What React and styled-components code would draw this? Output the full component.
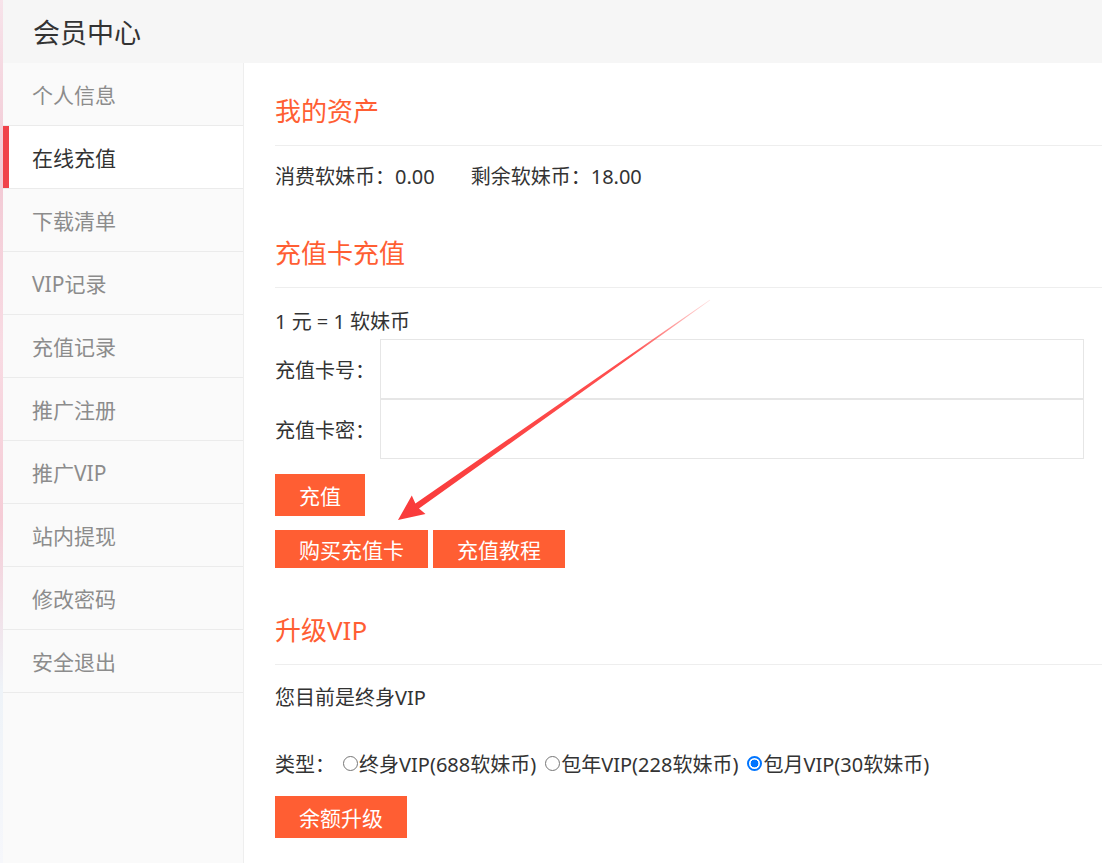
import React, { useState } from 'react'
import styled, { createGlobalStyle } from 'styled-components'

const GlobalStyle = createGlobalStyle`
    html, body {
        margin: 0;
        padding: 0;
    }
    body {
        font-family: "Noto Sans", "Noto Sans CJK SC", sans-serif;
        color: #333;
        background: linear-gradient(180deg, #f7e3ea 0%, #f2c9d4 20%, #f8dbe3 40%, #f5ccd6 60%, #eef3f8 80%, #f6f7fb 100%);
    }
`;

const ORANGE = '#ff5e33';

const StyledPage = styled.div`
    position: relative;
    margin-left: 3px;
    min-height: 863px;
    display: flex;
    flex-direction: column;
    background-color: #ffffff;
    overflow: hidden;
`;

const StyledHeader = styled.header`
    height: 63px;
    display: flex;
    align-items: center;
    padding-left: 30px;
    background-color: #f6f6f6;
    font-size: 27px;
    color: #333;
`;

const StyledBody = styled.div`
    flex: 1;
    display: flex;
`;

const StyledSidebar = styled.nav`
    width: 240px;
    flex-shrink: 0;
    background-color: #fafafa;
    border-right: 1px solid #eeeeee;
    display: flex;
    flex-direction: column;
`;

const StyledNavItem = styled.a`
    height: 62px;
    display: flex;
    align-items: center;
    padding-left: 29px;
    border-bottom: 1px solid #ebebeb;
    font-size: 21px;
    color: ${props => props.$active ? '#333' : '#8c8c8c'};
    background-color: ${props => props.$active ? '#ffffff' : 'transparent'};
    box-shadow: ${props => props.$active ? 'inset 6px 0 0 #f0424a' : 'none'};
    text-decoration: none;
    cursor: pointer;
`;

const StyledMain = styled.main`
    flex: 1;
    padding: 32px 0 0 31px;
    display: flex;
    flex-direction: column;
`;

const StyledSectionTitle = styled.h2`
    margin: ${props => props.$top || '0'} -40px 0 0;
    padding-bottom: 18px;
    border-bottom: 1px solid #eeeeee;
    font-size: 26px;
    line-height: 32px;
    font-weight: normal;
    color: ${ORANGE};
`;

const StyledTextRow = styled.div`
    margin-top: ${props => props.$gap || '20px'};
    display: flex;
    align-items: center;
    gap: ${props => props.$spacing || '0'};
    font-size: 20px;
    line-height: 24px;
    color: #333;
    white-space: nowrap;
`;

const StyledFieldRow = styled.label`
    display: flex;
    align-items: center;
    font-size: 20px;
    color: #333;
    margin-top: ${props => props.$gap || '0'};
`;

const StyledFieldLabel = styled.span`
    width: 105px;
    flex-shrink: 0;
`;

const StyledInput = styled.input`
    width: 704px;
    height: 60px;
    box-sizing: border-box;
    border: 1px solid #e6e6e6;
    outline: none;
    padding: 0 10px;
    font-size: 16px;
    font-family: inherit;
`;

const StyledButtonRow = styled.div`
    margin-top: ${props => props.$gap || '15px'};
    display: flex;
    gap: 5px;
`;

const StyledButton = styled.button`
    height: ${props => props.$height || '38px'};
    padding: 0 24px;
    border: none;
    background-color: ${ORANGE};
    color: #ffffff;
    font-size: 21px;
    font-family: inherit;
    cursor: pointer;
`;

const StyledRadioGroup = styled.div`
    display: flex;
    align-items: center;
    margin-left: 8px;
    gap: 9px;
`;

const StyledRadioLabel = styled.label`
    display: flex;
    align-items: center;
    cursor: pointer;
`;

const StyledRadio = styled.input`
    appearance: none;
    flex-shrink: 0;
    width: 15px;
    height: 15px;
    margin: 0 1px 3px 0;
    box-sizing: border-box;
    border-radius: 50%;
    border: 1px solid #767676;
    background-color: #ffffff;
    cursor: pointer;

    &:checked {
        border: 2px solid #0075ff;
        background: radial-gradient(circle, #0075ff 0 3.6px, #ffffff 4.2px);
    }
`;

const StyledArrow = styled.svg`
    position: absolute;
    left: -3px;
    top: 0;
    pointer-events: none;
`;

const menuItems = ['个人信息', '在线充值', '下载清单', 'VIP记录', '充值记录', '推广注册', '推广VIP', '站内提现', '修改密码', '安全退出'];

const vipOptions = [
    { id: 'life', label: '终身VIP(688软妹币)' },
    { id: 'year', label: '包年VIP(228软妹币)' },
    { id: 'month', label: '包月VIP(30软妹币)' },
];

// annotation arrow drawn over the page, points at the "购买充值卡" button
const Arrow = () => (
    <StyledArrow width="1102" height="863" viewBox="0 0 1102 863">
        <defs>
            <linearGradient id="arrowFade" x1="710" y1="300" x2="398" y2="520" gradientUnits="userSpaceOnUse">
                <stop offset="0" stopColor="#ff3d3d" stopOpacity="0.15" />
                <stop offset="0.25" stopColor="#ff3d3d" stopOpacity="0.9" />
                <stop offset="1" stopColor="#f93a3a" stopOpacity="1" />
            </linearGradient>
        </defs>
        <polygon
            fill="url(#arrowFade)"
            points="398,520 425.5,514 419,508.6 710.2,300.3 709.8,299.7 415.4,503.5 411.8,495.6"
        />
    </StyledArrow>
);

const App = () => {
    const [active, setActive] = useState('在线充值');
    const [vip, setVip] = useState('month');

    return (
        <>
            <GlobalStyle />
            <StyledPage>
                <StyledHeader>会员中心</StyledHeader>
                <StyledBody>
                    <StyledSidebar>
                        {menuItems.map(item => (
                            <StyledNavItem key={item} $active={item === active} onClick={() => setActive(item)}>
                                {item}
                            </StyledNavItem>
                        ))}
                    </StyledSidebar>
                    <StyledMain>
                        <StyledSectionTitle>我的资产</StyledSectionTitle>
                        <StyledTextRow $gap="19px" $spacing="36px">
                            <span>消费软妹币：0.00</span>
                            <span>剩余软妹币：18.00</span>
                        </StyledTextRow>

                        <StyledSectionTitle $top="48px">充值卡充值</StyledSectionTitle>
                        <StyledTextRow $gap="22px">1 元 = 1 软妹币</StyledTextRow>
                        <StyledFieldRow $gap="5px">
                            <StyledFieldLabel>充值卡号：</StyledFieldLabel>
                            <StyledInput type="text" />
                        </StyledFieldRow>
                        <StyledFieldRow>
                            <StyledFieldLabel>充值卡密：</StyledFieldLabel>
                            <StyledInput type="password" />
                        </StyledFieldRow>
                        <StyledButtonRow $gap="15px">
                            <StyledButton $height="42px">充值</StyledButton>
                        </StyledButtonRow>
                        <StyledButtonRow $gap="14px">
                            <StyledButton>购买充值卡</StyledButton>
                            <StyledButton>充值教程</StyledButton>
                        </StyledButtonRow>

                        <StyledSectionTitle $top="46px">升级VIP</StyledSectionTitle>
                        <StyledTextRow $gap="21px">您目前是终身VIP</StyledTextRow>
                        <StyledTextRow $gap="43px">
                            <span>类型：</span>
                            <StyledRadioGroup>
                                {vipOptions.map(opt => (
                                    <StyledRadioLabel key={opt.id}>
                                        <StyledRadio
                                            type="radio"
                                            name="vip"
                                            checked={vip === opt.id}
                                            onChange={() => setVip(opt.id)}
                                        />
                                        {opt.label}
                                    </StyledRadioLabel>
                                ))}
                            </StyledRadioGroup>
                        </StyledTextRow>
                        <StyledButtonRow $gap="19px">
                            <StyledButton $height="42px">余额升级</StyledButton>
                        </StyledButtonRow>
                    </StyledMain>
                </StyledBody>
                <Arrow />
            </StyledPage>
        </>
    );
}

export default App;
